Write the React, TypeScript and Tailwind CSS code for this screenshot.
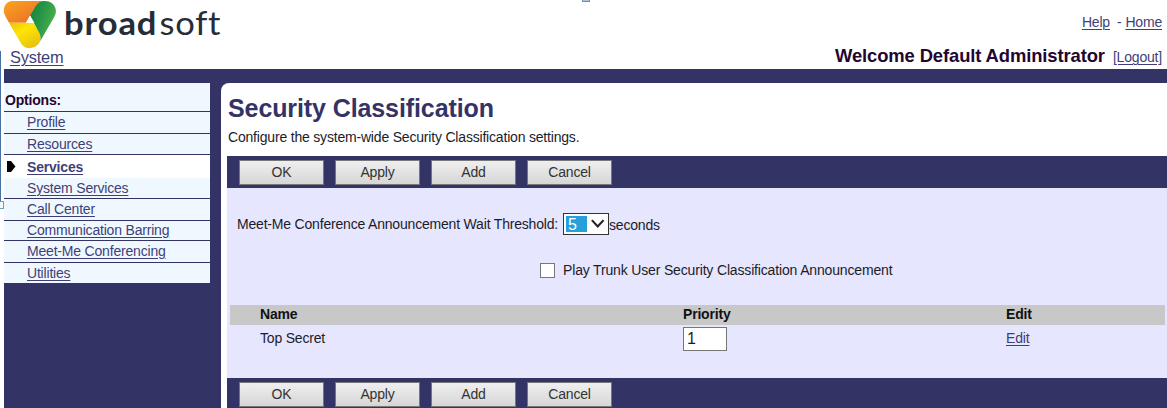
import React from "react";

const navItems = [
  { label: "Profile", box: "h-[22px] border-b pb-[2px]" },
  { label: "Resources", box: "h-[21px] border-b" },
  { label: "Services", box: "h-[23px]", active: true },
  { label: "System Services", box: "h-[21px] border-b" },
  { label: "Call Center", box: "h-[22px] border-b pb-px" },
  { label: "Communication Barring", box: "h-[20px] border-b pb-[2px]" },
  { label: "Meet-Me Conferencing", box: "h-[22px] border-b pb-[2px]" },
  { label: "Utilities", box: "h-[20px] pb-px" },
];

const link = "text-[#3f3f78] underline underline-offset-[1.5px] decoration-1";

function Logo() {
  return (
    <div className="flex h-[48px] items-start">
      <svg width="56" height="48" viewBox="0 0 56 48" className="shrink-0">
        <defs>
          <linearGradient id="o" x1="0" y1="0" x2="1" y2="1">
            <stop offset="0" stopColor="#f9a51f" />
            <stop offset="0.6" stopColor="#f08026" />
            <stop offset="1" stopColor="#e0661f" />
          </linearGradient>
          <linearGradient id="g" x1="0" y1="0" x2="1" y2="0.5">
            <stop offset="0" stopColor="#157f3c" />
            <stop offset="0.45" stopColor="#259447" />
            <stop offset="1" stopColor="#4db04c" />
          </linearGradient>
          <linearGradient id="y" x1="0" y1="0" x2="0.8" y2="1">
            <stop offset="0" stopColor="#e9c10c" />
            <stop offset="0.4" stopColor="#ffe404" />
            <stop offset="1" stopColor="#e6c010" />
          </linearGradient>
        </defs>
        <path d="M12 1H44C38 2 35 6 32 11L25 22.800H8L4.500 16.500C0.500 9 4 1 12 1Z" fill="url(#o)" />
        <path d="M8 22.800H32.500C37 30 41 34 39 41.500C36.500 46 33 48 28.500 48C24 48 21.500 46 19.500 42.500Z" fill="url(#y)" />
        <path d="M29 15.500L34.500 6.500C37 2.500 40 1 44 1C52.500 1 57.500 9 53.500 16.500L39 41.500C40.500 36 38.500 33 36.500 29.500Z" fill="url(#g)" />
        <path d="M29 15.500L24.800 22.900H33.300Z" fill="#fff" />
      </svg>
      <div className="ml-[7px] flex origin-left scale-x-[1.08] gap-[2px] font-['Lato',sans-serif] text-[32px] leading-[46px] text-[#262d38]">
        <span className="font-bold tracking-[0.8px]">broad</span>
        <span className="tracking-[0.7px]">soft</span>
      </div>
    </div>
  );
}

function ButtonBar({ box }: { box: string }) {
  return (
    <div className={"flex shrink-0 gap-[11px] bg-[#333366] pl-[12px] " + box}>
      {["OK", "Apply", "Add", "Cancel"].map((t) => (
        <button
          key={t}
          className="h-[25px] w-[85px] border border-[#777] bg-linear-to-b from-[#efefef] to-[#d6d6d6] leading-[23px] text-[#333]"
        >
          {t}
        </button>
      ))}
    </div>
  );
}

export default function App() {
  return (
    <div className="relative flex h-[408px] w-[1167px] flex-col overflow-hidden bg-white font-['Liberation_Sans',Arial,sans-serif] text-[14px] leading-[16px] tracking-[-0.19px] text-[#1c1c28]">
      <div className="absolute left-0 top-[51px] h-[150px] w-px bg-[#44719f]" />
      <div className="absolute -left-[4px] top-[201px] h-[8px] w-[8px] border border-[#6f9db5] bg-[#f2fafc]" />
      <div className="absolute left-[582px] -top-[6px] h-[8px] w-[8px] border border-[#6f8fb5] bg-[#a9c4dd]" />

      <header className="flex h-[69px] shrink-0 justify-between pl-px pr-[5px]">
        <div className="flex flex-col">
          <Logo />
          <a className={"ml-[9px] text-[16.4px] leading-[18px] " + link}>System</a>
        </div>
        <div className="flex flex-col items-end">
          <div className="mt-[14px] flex text-[#3f3f78]">
            <a className={link}>Help</a>
            <span className="ml-[7px] mr-[4px]">-</span>
            <a className={link}>Home</a>
          </div>
          <div className="mt-[15px] flex items-baseline gap-[8px]">
            <span className="text-[18.4px] font-bold leading-[22px] tracking-[-0.1px] text-[#24052f]">
              Welcome Default Administrator
            </span>
            <a className={link}>[Logout]</a>
          </div>
        </div>
      </header>

      <div className="ml-[4px] flex grow flex-col bg-[#333366] pt-[14px]">
        <div className="flex grow">
          <nav className="w-[206px] shrink-0">
            <div className="h-[29px] border-b border-[#333366] bg-[#f0f8ff] pl-px pt-[9px] font-bold text-[#24052f]">
              Options:
            </div>
            {navItems.map((n) => (
              <div
                key={n.label}
                className={
                  "flex items-center border-[#333366] " + n.box + (n.active ? " bg-white font-bold" : " bg-[#f0f8ff]")
                }
              >
                <span className="flex w-[23px] pl-[2px]">
                  {n.active && (
                    <svg width="10" height="11" viewBox="0 0 10 11">
                      <path d="M1 0H5L9.500 5.500L5 11H1Z" fill="#000" />
                    </svg>
                  )}
                </span>
                <a className={link}>{n.label}</a>
              </div>
            ))}
          </nav>
          <main className="ml-[11px] flex grow flex-col rounded-tl-[8px] bg-white pl-[6px]">
            <h1 className="ml-px mt-[11px] text-[25px] font-bold leading-[28px] tracking-[-0.1px] text-[#333366]">
              Security Classification
            </h1>
            <p className="ml-px mt-[7px]">Configure the system-wide Security Classification settings.</p>
            <ButtonBar box="mt-[11px] h-[32px] pt-[4px]" />
            <section className="h-[190px] shrink-0 bg-[#e6e6ff] pl-[3px] pr-[2px]">
              <div className="flex h-[72px] items-center pl-[7px]">
                <span className="w-[326px]">Meet-Me Conference Announcement Wait Threshold:</span>
                <div className="flex h-[22px] w-[46px] border border-[#333] bg-white p-[2px]">
                  <span className="w-[21px] bg-[#26a0da] pl-[2px] text-[16px] leading-[18px] text-white">5</span>
                  <svg width="20" height="16" viewBox="0 0 20 16">
                    <path d="M5 4L11 10.500L17 4" fill="none" stroke="#222" strokeWidth="2.200" />
                  </svg>
                </div>
                <span className="mt-[2px]">seconds</span>
              </div>
              <div className="flex h-[20px] items-center pl-[310px]">
                <span className="mr-[8px] h-[15px] w-[15px] border border-[#777] bg-white" />
                <span className="tracking-[-0.16px]">Play Trunk User Security Classification Announcement</span>
              </div>
              <div className="mt-[25px] flex h-[20px] items-center bg-[#c8c8c8] pb-[2px] pl-[30px] font-bold text-[#111]">
                <span className="w-[423px]">Name</span>
                <span className="w-[323px]">Priority</span>
                <span>Edit</span>
              </div>
              <div className="flex h-[26px] items-center pl-[30px]">
                <span className="w-[423px]">Top Secret</span>
                <span className="w-[323px]">
                  <span className="mt-[2px] flex h-[24px] w-[44px] items-center border border-[#777] bg-white pl-[3px] text-[16px]">
                    1
                  </span>
                </span>
                <a className={link}>Edit</a>
              </div>
            </section>
            <ButtonBar box="h-[30px] pt-[4px]" />
          </main>
        </div>
      </div>
    </div>
  );
}
